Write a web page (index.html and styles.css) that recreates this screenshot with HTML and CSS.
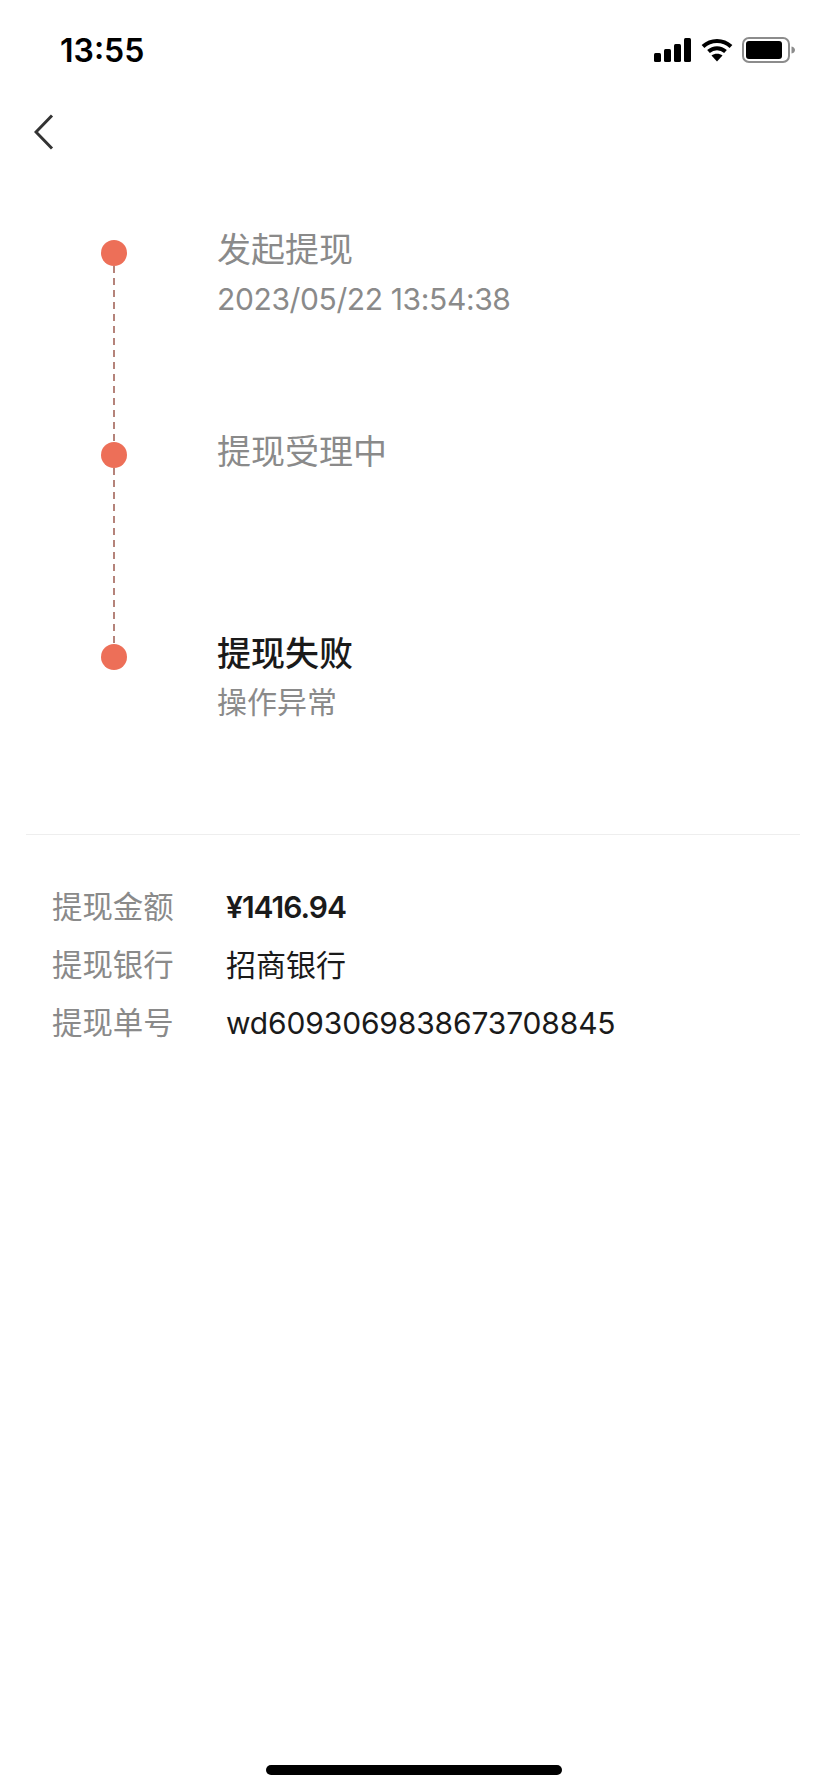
FILE: index.html
```html
<!DOCTYPE html>
<html lang="zh-CN">
<head>
<meta charset="utf-8">
<title>提现详情</title>
<link rel="stylesheet" href="styles.css">
</head>
<body>
<div class="page">
  <header class="status">
    <span class="time">13:55</span>
    <div class="status-icons">
      <svg class="signal" width="38" height="24" viewBox="0 0 38 24"><rect x="0" y="15" width="7" height="9" rx="1.5"/><rect x="10" y="11" width="7" height="13" rx="1.5"/><rect x="20" y="6" width="7" height="18" rx="1.5"/><rect x="30" y="0" width="7" height="24" rx="1.5"/></svg>
      <svg class="wifi" width="32" height="24" viewBox="0 0 32 24"><path d="M2 8.500C10 1 22 1 30 8.500M7.500 13.500C12.500 9 19.500 9 24.500 13.500" fill="none" stroke="#000" stroke-width="4"/><path d="M16 23.500L10.500 17.500C13.500 15.200 18.500 15.200 21.500 17.500Z"/></svg>
      <svg class="battery" width="53" height="26" viewBox="0 0 53 26"><rect x="1" y="1" width="46" height="24" rx="6" fill="none" stroke="#8c8c8c" stroke-width="2"/><rect x="4" y="4" width="36" height="18" rx="3"/><path d="M49.500 9.500C52 10 53 11.500 53 13C53 14.500 52 16 49.500 16.500Z" fill="#8c8c8c"/></svg>
    </div>
  </header>
  <nav class="nav">
    <svg class="back" width="20" height="36" viewBox="0 0 20 36"><path d="M18 1.500L2 18L18 34.500" fill="none" stroke="#333" stroke-width="3"/></svg>
  </nav>
  <section class="timeline">
    <div class="step">
      <div class="rail"><span class="dot"></span><span class="dash"></span></div>
      <div class="info">
        <div class="title">发起提现</div>
        <div class="sub date">2023/05/22 13:54:38</div>
      </div>
    </div>
    <div class="step">
      <div class="rail"><span class="dot"></span><span class="dash"></span></div>
      <div class="info">
        <div class="title">提现受理中</div>
      </div>
    </div>
    <div class="step last">
      <div class="rail"><span class="dot"></span></div>
      <div class="info">
        <div class="title strong">提现失败</div>
        <div class="sub">操作异常</div>
      </div>
    </div>
  </section>
  <hr class="divider">
  <dl class="details">
    <div class="row"><dt>提现金额</dt><dd class="amount">¥1416.94</dd></div>
    <div class="row"><dt>提现银行</dt><dd>招商银行</dd></div>
    <div class="row"><dt>提现单号</dt><dd class="num">wd6093069838673708845</dd></div>
  </dl>
  <div class="home"></div>
</div>
</body>
</html>
```
FILE: styles.css
```css
* { box-sizing: border-box; }
html, body { margin: 0; padding: 0; background: #fff; }
body {
  font-family: Inter, "Noto Sans CJK SC", sans-serif;
  color: #1a1a1a;
}
.page {
  width: 828px;
  height: 1792px;
  display: flex;
  flex-direction: column;
  overflow: hidden;
}
.status {
  height: 100px;
  padding: 31px 33px 0 60px;
  display: flex;
  justify-content: space-between;
  align-items: flex-start;
}
.time {
  font-family: Inter, sans-serif;
  font-size: 32px;
  line-height: 40px;
  font-weight: 600;
  color: #000;
}
.status-icons {
  display: flex;
  align-items: center;
  gap: 9px;
  padding-top: 6px;
}
.nav {
  height: 64px;
  padding: 14px 0 0 34px;
}
.back { display: block; }
.timeline {
  padding: 58px 0 0 101px;
  display: flex;
  flex-direction: column;
}
.step {
  height: 202px;
  display: flex;
}
.step.last { height: 208px; }
.rail {
  width: 26px;
  margin-right: 90px;
  display: flex;
  flex-direction: column;
  align-items: center;
  padding-top: 18px;
}
.dot {
  width: 26px;
  height: 26px;
  flex: none;
  border-radius: 50%;
  background: #ed6f58;
}
.dash {
  flex: 1;
  width: 2px;
  margin-bottom: -18px;
  background: repeating-linear-gradient(to bottom, #b5837a 0 7px, transparent 7px 12px);
}
.info {
  display: flex;
  flex-direction: column;
  padding-top: 4px;
}
.title {
  font-size: 34px;
  line-height: 48px;
  color: #8a8a8a;
}
.title.strong {
  color: #1a1a1a;
  font-weight: 500;
}
.sub {
  font-size: 30px;
  line-height: 40px;
  margin-top: 4px;
  color: #8a8a8a;
}
.sub.date {
  margin-top: 5px;
  letter-spacing: -0.37px;
}
.divider {
  border: 0;
  height: 1px;
  margin: 0 28px 0 26px;
  background: #eeeeee;
}
.details {
  margin: 0;
  padding: 52px 0 0 52px;
  display: flex;
  flex-direction: column;
  gap: 18px;
}
.row {
  display: flex;
  height: 40px;
  align-items: center;
}
.row dt {
  width: 174px;
  font-size: 30.4px;
  line-height: 40px;
  color: #8a8a8a;
}
.row dd {
  margin: 0;
  font-size: 30px;
  line-height: 40px;
  color: #1a1a1a;
}
.row dd.amount {
  font-weight: 600;
  letter-spacing: -1px;
}
.row dd.num { letter-spacing: -0.15px; }
.home {
  margin: auto auto 17px;
  width: 296px;
  height: 10px;
  border-radius: 5px;
  background: #000;
}
```
